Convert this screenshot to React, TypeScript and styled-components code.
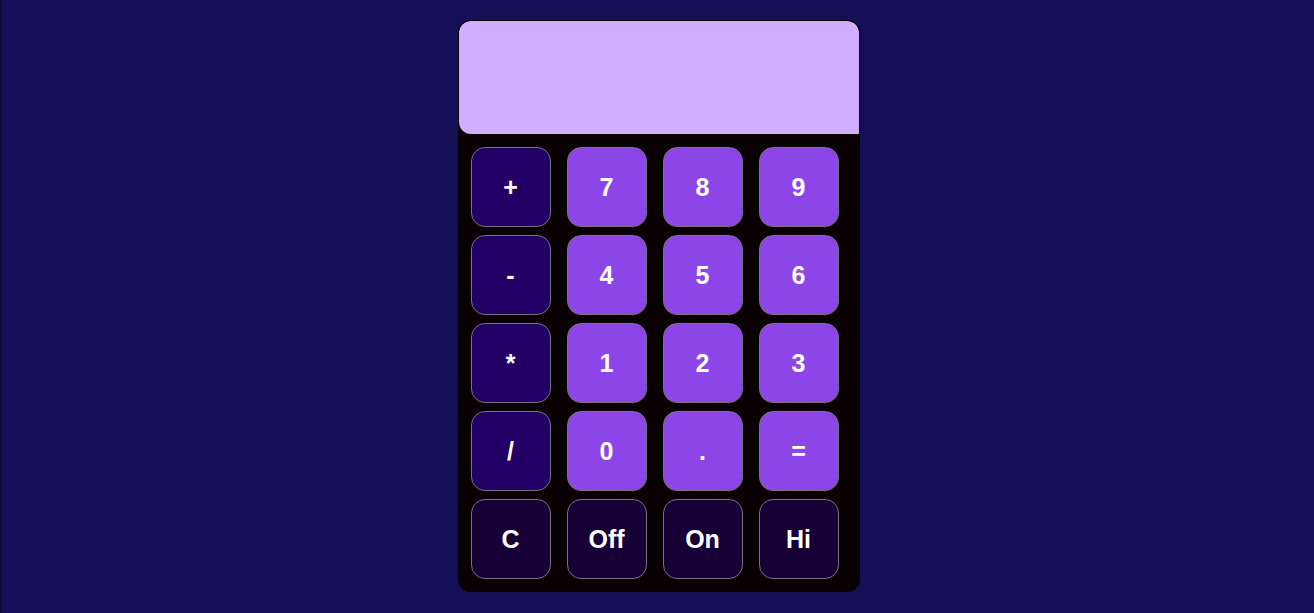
import styled, { createGlobalStyle, css } from 'styled-components'

const GlobalStyle = createGlobalStyle`
  html, body {
    margin: 0;
    padding: 0;
    background: #140f57;
  }
  body {
    font-family: 'Liberation Sans', Arial, sans-serif;
  }
`

type Kind = 'op' | 'num' | 'ctl'

const Page = styled.div`
  min-height: 613px;
  box-sizing: border-box;
  display: flex;
  justify-content: center;
  align-items: flex-start;
  padding: 20px 0 0 2px;
  border-left: 1px solid #0c0a2e;
`

const Calculator = styled.div`
  width: 400px;
  background: #080002;
  border: 1px solid #080002;
  border-radius: 12px;
  overflow: hidden;
  display: flex;
  flex-direction: column;
`

const Display = styled.div`
  height: 113px;
  background: #d0adff;
  border-radius: 12px 12px 0 12px;
`

const Keys = styled.div`
  display: grid;
  grid-template-columns: repeat(4, 80px);
  column-gap: 16px;
  row-gap: 8px;
  padding: 13px 20px 12px 12px;
`

const kindColors: Record<Kind, string> = {
  op: '#230066',
  num: '#8c46e8',
  ctl: '#160036',
}

const Key = styled.button<{ $kind: Kind }>(
  ({ $kind }) => css`
    width: 80px;
    height: 80px;
    box-sizing: border-box;
    border: 1px solid #77727f;
    border-radius: 14px;
    background: ${kindColors[$kind]};
    color: #ffffff;
    font-family: 'Liberation Sans', Arial, sans-serif;
    font-weight: 700;
    font-size: 25px;
    display: flex;
    align-items: center;
    justify-content: center;
    padding: 0;
    cursor: pointer;
  `,
)

const rows: { label: string; kind: Kind }[][] = [
  [
    { label: '+', kind: 'op' },
    { label: '7', kind: 'num' },
    { label: '8', kind: 'num' },
    { label: '9', kind: 'num' },
  ],
  [
    { label: '-', kind: 'op' },
    { label: '4', kind: 'num' },
    { label: '5', kind: 'num' },
    { label: '6', kind: 'num' },
  ],
  [
    { label: '*', kind: 'op' },
    { label: '1', kind: 'num' },
    { label: '2', kind: 'num' },
    { label: '3', kind: 'num' },
  ],
  [
    { label: '/', kind: 'op' },
    { label: '0', kind: 'num' },
    { label: '.', kind: 'num' },
    { label: '=', kind: 'num' },
  ],
  [
    { label: 'C', kind: 'ctl' },
    { label: 'Off', kind: 'ctl' },
    { label: 'On', kind: 'ctl' },
    { label: 'Hi', kind: 'ctl' },
  ],
]

export default function App() {
  return (
    <>
      <GlobalStyle />
      <Page>
        <Calculator>
          <Display />
          <Keys>
            {rows.flat().map((k) => (
              <Key key={k.label} $kind={k.kind}>
                {k.label}
              </Key>
            ))}
          </Keys>
        </Calculator>
      </Page>
    </>
  )
}
